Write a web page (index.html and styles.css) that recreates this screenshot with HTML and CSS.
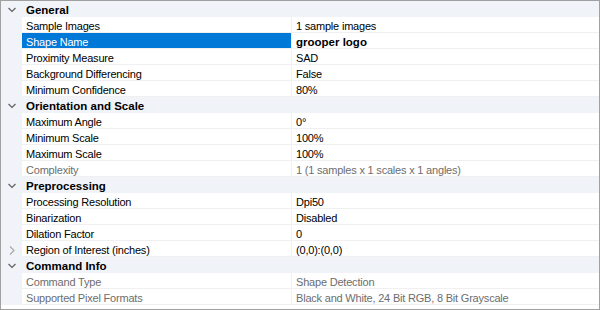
FILE: index.html
```html
<!DOCTYPE html>
<html>
<head>
  <title>Properties</title>
  <link rel="stylesheet" href="styles.css">
</head>
<body>
  <div class="grid">
    <div class="cat"><svg class="toggle" width="21" height="16"><polyline points="7.5,7 11,10.5 14.5,7"/></svg><span class="cat-name">General</span></div>
    <div class="row"><span class="gutter"></span><span class="name">Sample Images</span><span class="value">1 sample images</span></div>
    <div class="row selected"><span class="gutter"></span><span class="name">Shape Name</span><span class="value bold">grooper logo</span></div>
    <div class="row"><span class="gutter"></span><span class="name">Proximity Measure</span><span class="value">SAD</span></div>
    <div class="row"><span class="gutter"></span><span class="name">Background Differencing</span><span class="value">False</span></div>
    <div class="row"><span class="gutter"></span><span class="name">Minimum Confidence</span><span class="value">80%</span></div>

    <div class="cat"><svg class="toggle" width="21" height="16"><polyline points="7.5,7 11,10.5 14.5,7"/></svg><span class="cat-name">Orientation and Scale</span></div>
    <div class="row"><span class="gutter"></span><span class="name">Maximum Angle</span><span class="value">0°</span></div>
    <div class="row"><span class="gutter"></span><span class="name">Minimum Scale</span><span class="value">100%</span></div>
    <div class="row"><span class="gutter"></span><span class="name">Maximum Scale</span><span class="value">100%</span></div>
    <div class="row readonly"><span class="gutter"></span><span class="name">Complexity</span><span class="value">1 (1 samples x 1 scales x 1 angles)</span></div>

    <div class="cat"><svg class="toggle" width="21" height="16"><polyline points="7.5,7 11,10.5 14.5,7"/></svg><span class="cat-name">Preprocessing</span></div>
    <div class="row"><span class="gutter"></span><span class="name">Processing Resolution</span><span class="value">Dpi50</span></div>
    <div class="row"><span class="gutter"></span><span class="name">Binarization</span><span class="value">Disabled</span></div>
    <div class="row"><span class="gutter"></span><span class="name">Dilation Factor</span><span class="value">0</span></div>
    <div class="row"><span class="gutter"><svg class="expand" width="21" height="16"><polyline points="9,5.5 13,9.5 9,13.5"/></svg></span><span class="name">Region of Interest (inches)</span><span class="value">(0,0):(0,0)</span></div>

    <div class="cat"><svg class="toggle" width="21" height="16"><polyline points="7.5,7 11,10.5 14.5,7"/></svg><span class="cat-name">Command Info</span></div>
    <div class="row readonly"><span class="gutter"></span><span class="name">Command Type</span><span class="value">Shape Detection</span></div>
    <div class="row readonly"><span class="gutter"></span><span class="name">Supported Pixel Formats</span><span class="value">Black and White, 24 Bit RGB, 8 Bit Grayscale</span></div>
  </div>
</body>
</html>
```

FILE: styles.css
```css
body {
  margin: 0;
  font-family: "Liberation Sans", Arial, sans-serif;
  font-size: 11px;
  letter-spacing: -0.2px;
  color: #000;
}

.grid {
  width: 600px;
  height: 310px;
  box-sizing: border-box;
  border: 1px solid #a0a0a0;
  background-color: #fff;
  overflow: hidden;
}

.cat {
  display: flex;
  height: 16px;
  background-color: #f0f4f9;
}

.toggle {
  flex: none;
  fill: none;
  stroke: #606060;
  stroke-width: 1.2;
}

.cat-name {
  padding: 2px 0 0 4px;
  line-height: 14px;
  font-weight: bold;
  font-size: 11.5px;
  letter-spacing: 0;
}

.row {
  display: flex;
  height: 16px;
}

.gutter {
  width: 21px;
  flex: none;
  background-color: #f0f4f9;
}

.expand {
  display: block;
  fill: none;
  stroke: #a8a8a8;
  stroke-width: 1.2;
}

.name,
.value {
  box-sizing: border-box;
  height: 16px;
  padding: 3px 0 0 4px;
  line-height: 12px;
  border-bottom: 1px solid #f0f0f0;
  white-space: nowrap;
}

.name {
  width: 270px;
  flex: none;
  border-right: 1px solid #f0f0f0;
}

.value {
  flex: 1;
}

.bold {
  font-weight: bold;
  font-size: 11.5px;
  letter-spacing: 0;
}

.selected .name {
  background-color: #0078d7;
  color: #fff;
}

.readonly .name,
.readonly .value {
  color: #6d6d6d;
}
```
